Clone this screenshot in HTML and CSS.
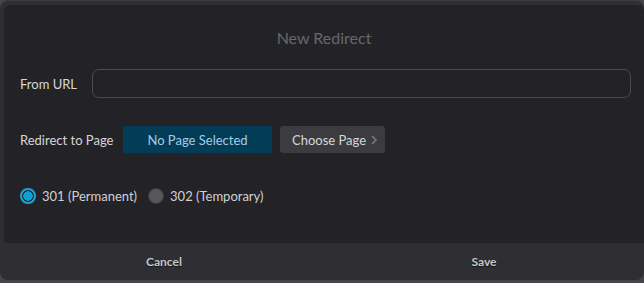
FILE: index.html
```html
<!DOCTYPE html>
<html>
<head>
<meta charset="utf-8">
<link rel="stylesheet" href="styles.css">
</head>
<body>
<div class="dialog">
  <div class="panel">
    <div class="title">New Redirect</div>
    <div class="row row-url">
      <label class="label">From URL</label>
      <div class="input"></div>
    </div>
    <div class="row row-page">
      <span class="label">Redirect to Page</span>
      <div class="selected">No Page Selected</div>
      <div class="choose">Choose Page
        <svg class="chev" width="6" height="10" viewBox="0 0 6 10"><path d="M1 1 L5 5 L1 9" fill="none" stroke="#6e6e73" stroke-width="1.8"/></svg>
      </div>
    </div>
    <div class="row row-radio">
      <span class="radio on"></span><span class="rlabel">301 (Permanent)</span>
      <span class="radio off"></span><span class="rlabel">302 (Temporary)</span>
    </div>
  </div>
  <div class="footer">
    <div class="fbtn">Cancel</div>
    <div class="fbtn">Save</div>
  </div>
</div>
</body>
</html>
```
FILE: styles.css
```css
html, body {
  margin: 0;
  padding: 0;
  background: #45454a;
  font-family: Lato, "Liberation Sans", sans-serif;
}
.dialog {
  height: 280px;
  background: #2e2e33;
  border-top: 1px solid #3c3c41;
  border-radius: 8px;
  padding: 4px 0 0 4px;
  box-sizing: border-box;
  display: flex;
  flex-direction: column;
}
.panel {
  height: 239px;
  background: #232327;
  border-radius: 6px 6px 0 0;
  padding: 23px 13px 0 16px;
  box-sizing: border-box;
}
.title {
  text-align: center;
  color: #67676d;
  font-size: 16px;
  line-height: 20px;
  padding-right: 3px;
}
.row {
  display: flex;
  align-items: center;
}
.label {
  color: #d6d6d8;
  font-size: 13px;
}
.row-url {
  margin-top: 21px;
  height: 29px;
}
.row-url .label {
  width: 72px;
}
.input {
  flex: 1;
  height: 29px;
  box-sizing: border-box;
  border: 1px solid #4b4b50;
  border-radius: 7px;
  background: #232327;
}
.row-page {
  margin-top: 28px;
  height: 27px;
}
.row-page .label {
  width: 103px;
}
.selected {
  width: 149px;
  height: 27px;
  background: #033c57;
  color: #a6cbe0;
  font-size: 13px;
  display: flex;
  align-items: center;
  justify-content: center;
}
.choose {
  margin-left: 8px;
  width: 105px;
  height: 27px;
  box-sizing: border-box;
  background: #3b3b40;
  border-radius: 3px;
  color: #d6d6d8;
  font-size: 13px;
  display: flex;
  align-items: center;
  padding-left: 12px;
  gap: 5px;
}
.row-radio {
  margin-top: 33px;
  height: 20px;
}
.radio {
  width: 16px;
  height: 16px;
  box-sizing: border-box;
  border-radius: 50%;
  flex: none;
}
.radio.on {
  border: 2px solid #1ea5d8;
  background: radial-gradient(circle, #0e9fd4 0 4.5px, #232327 5px);
}
.radio.off {
  border: 1.5px solid #3e3e42;
  background: #57575b;
  margin-left: 11px;
}
.rlabel {
  color: #d0d0d3;
  font-size: 13px;
  margin-left: 6px;
}
.footer {
  height: 37px;
  display: grid;
  grid-template-columns: 1fr 1fr;
  align-items: center;
}
.fbtn {
  text-align: center;
  color: #c6c6ca;
  font-size: 12px;
  font-weight: bold;
  text-shadow: 0 1px 1px #151518;
}
```
